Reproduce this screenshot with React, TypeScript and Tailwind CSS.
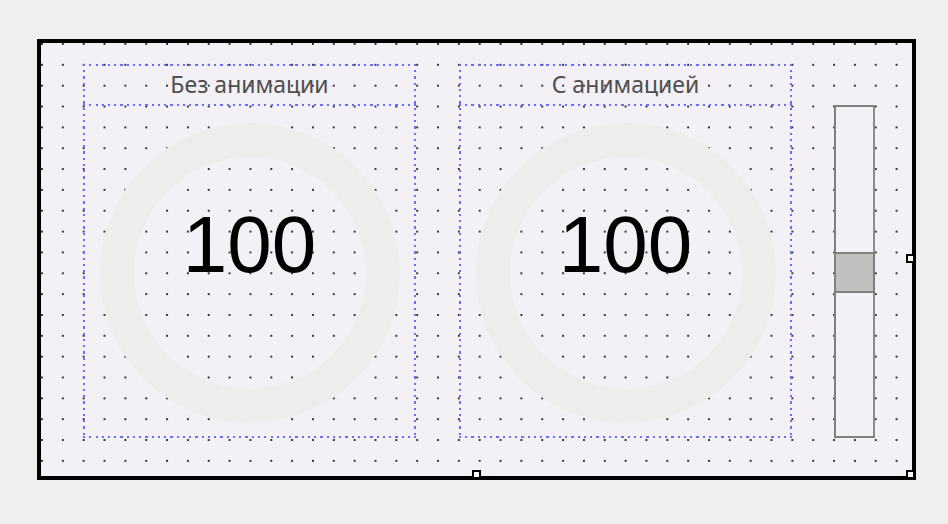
import React from "react";

const lineH =
  "bg-[repeating-linear-gradient(90deg,#6c6cff_0_2px,transparent_2px_6.25px)]";
const lineV =
  "bg-[repeating-linear-gradient(180deg,#6c6cff_0_2px,transparent_2px_6.25px)]";

function LayoutFrame() {
  return (
    <>
      <div className={`pointer-events-none absolute left-0 right-0 top-0 h-[2px] ${lineH}`} />
      <div className={`pointer-events-none absolute bottom-0 left-0 right-0 h-[2px] ${lineH}`} />
      <div className={`pointer-events-none absolute bottom-0 left-0 top-0 w-[2px] ${lineV}`} />
      <div className={`pointer-events-none absolute bottom-0 right-0 top-0 w-[2px] ${lineV}`} />
    </>
  );
}

function Gauge({ title, value }: { title: string; value: number }) {
  return (
    <div className="relative flex w-[333px] flex-col">
      <div className="relative flex h-[41px] items-center justify-center">
        <span className="font-['Noto_Sans',sans-serif] text-[23px] text-[#4f4f4f]">{title}</span>
        <div className={`pointer-events-none absolute bottom-[-1px] left-0 right-0 h-[2px] ${lineH}`} />
      </div>
      <div className="relative h-[333px] w-[333px]">
        <svg width="333" height="333" className="absolute left-0 top-0">
          <circle cx="167" cy="168" r="133" fill="none" stroke="#ededed" strokeWidth="34" />
        </svg>
        <div className="absolute left-0 right-0 top-[100px] text-center font-['Liberation_Sans',Arial,sans-serif] text-[80px] leading-none text-black">
          {value}
        </div>
      </div>
      <LayoutFrame />
    </div>
  );
}

function Slider() {
  return (
    <div className="mt-[41px] h-[333px] w-[41px]">
      <div className="relative h-full w-full border-2 border-[#808080] border-r-[#8c8c8c] bg-[#f3f0f6]">
        <div className="absolute left-[-2px] right-[-2px] top-[145px] h-[41px] border-2 border-[#808080] bg-[#c0c0c0]" />
      </div>
    </div>
  );
}

function Handle({ className }: { className: string }) {
  return <div className={`absolute h-[9px] w-[9px] border-2 border-black bg-white ${className}`} />;
}

export default function App() {
  return (
    <div className="h-[524px] w-[948px] overflow-hidden bg-[#efefef] pl-[37px] pt-[39px]">
      <div className="relative h-[441px] w-[879px] border-4 border-black">
        <div className="flex h-full w-full items-start bg-[#f3f0f6] bg-[radial-gradient(circle_at_1px_1px,#3a3a3a_0.9px,transparent_1.3px)] bg-[size:20.85px_20.85px] pl-[42px] pt-[21px]">
          <Gauge title="Без анимации" value={100} />
          <div className="w-[43px] shrink-0" />
          <Gauge title="С анимацией" value={100} />
          <div className="w-[42px] shrink-0" />
          <Slider />
        </div>
        <Handle className="left-[865px] top-[211px]" />
        <Handle className="left-[865px] top-[427px]" />
        <Handle className="left-[431px] top-[427px]" />
      </div>
    </div>
  );
}
